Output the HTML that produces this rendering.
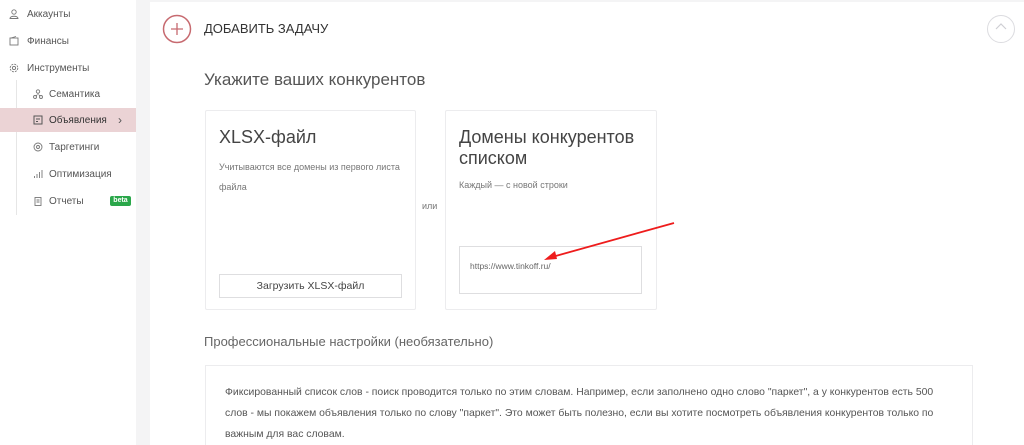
<!DOCTYPE html>
<html><head><meta charset="utf-8"><style>
*{box-sizing:border-box;margin:0;padding:0}
html,body{width:1024px;height:445px;overflow:hidden}
body{background:#f4f4f5;font-family:"Liberation Sans",sans-serif;position:relative;color:#333}
.side{position:absolute;left:0;top:0;width:136px;height:445px;background:#fff}
.it{position:absolute;font-size:10px;color:#555}
.ic{position:absolute;width:10px;height:10px}
.panel{position:absolute;left:150px;top:2px;width:874px;height:443px;background:#fff}
.a{position:absolute}
</style></head><body>
<div class="side">
 <svg class="ic" style="left:9px;top:9px" viewBox="0 0 10 10" fill="none" stroke="#777" stroke-width="0.9"><circle cx="5" cy="3" r="2.2"/><path d="M1 9.5c0-3 8-3 8 0z"/></svg>
 <div class="it" style="left:27px;top:9px">Аккаунты</div>
 <svg class="ic" style="left:9px;top:36px" viewBox="0 0 10 10" fill="none" stroke="#777" stroke-width="0.9"><rect x="1" y="2" width="8" height="7"/><path d="M2 2l5-1.5"/></svg>
 <div class="it" style="left:27px;top:36px">Финансы</div>
 <svg class="ic" style="left:9px;top:63px" viewBox="0 0 10 10" fill="none" stroke="#777" stroke-width="0.9"><circle cx="5" cy="5" r="1.6"/><circle cx="5" cy="5" r="3.8" stroke-dasharray="2 1"/></svg>
 <div class="it" style="left:27px;top:63px">Инструменты</div>
 <div class="a" style="left:16px;top:80px;width:1px;height:135px;background:#e6e6e6"></div>
 <svg class="ic" style="left:33px;top:89px" viewBox="0 0 10 10" fill="none" stroke="#777" stroke-width="0.9"><circle cx="5" cy="2.5" r="1.7"/><circle cx="2" cy="8" r="1.5"/><circle cx="8" cy="8" r="1.5"/><path d="M5 4v2M4 6l-1 1M6 6l1 1"/></svg>
 <div class="it" style="left:49px;top:89px">Семантика</div>
 <div class="a" style="left:0;top:108px;width:136px;height:24px;background:#ebd3d5"></div>
 <svg class="ic" style="left:33px;top:115px" viewBox="0 0 10 10" fill="none" stroke="#555" stroke-width="1"><rect x="1" y="1" width="8" height="8"/><path d="M3 4h4M3 6.5h2"/></svg>
 <div class="it" style="left:49px;top:115px;color:#333">Объявления</div>
 <div class="it" style="left:118px;top:113px;font-size:12px;color:#555">›</div>
 <svg class="ic" style="left:33px;top:142px" viewBox="0 0 10 10" fill="none" stroke="#777" stroke-width="0.9"><circle cx="5" cy="5" r="4"/><circle cx="5" cy="5" r="1.5"/></svg>
 <div class="it" style="left:49px;top:142px">Таргетинги</div>
 <svg class="ic" style="left:33px;top:169px" viewBox="0 0 10 10" fill="none" stroke="#777" stroke-width="0.9"><path d="M1.5 9V7M4 9V5M6.5 9V3M9 9V1"/></svg>
 <div class="it" style="left:49px;top:169px">Оптимизация</div>
 <svg class="ic" style="left:33px;top:196px" viewBox="0 0 10 10" fill="none" stroke="#777" stroke-width="0.9"><rect x="2" y="1.5" width="6" height="8"/><path d="M3.5 4h3M3.5 6h3"/></svg>
 <div class="it" style="left:49px;top:196px">Отчеты</div>
 <div class="a" style="left:110px;top:196px;width:21px;height:10px;background:#2aa74a;border-radius:2px;color:#fff;font-size:7px;font-weight:bold;text-align:center;line-height:10px">beta</div>
</div>
<div class="panel"></div>
<svg class="a" style="left:162px;top:14px" width="30" height="30" viewBox="0 0 30 30" fill="none" stroke="#c76a70" stroke-width="1.5"><circle cx="15" cy="15" r="13.5"/><path d="M9 15h12M15 9v12" stroke-width="1.3"/></svg>
<div class="a" style="left:204px;top:21px;font-size:13px;color:#333">ДОБАВИТЬ ЗАДАЧУ</div>
<div class="a" style="left:987px;top:15px;width:28px;height:28px;border:1.2px solid #dcdce0;border-radius:50%"></div>
<svg class="a" style="left:993px;top:21px" width="16" height="12" viewBox="0 0 16 12" fill="none" stroke="#cfcfd4" stroke-width="1.2"><path d="M3 8l5-5 5 5"/></svg>
<div class="a" style="left:204px;top:70px;font-size:17px;color:#555">Укажите ваших конкурентов</div>
<div class="a" style="left:205px;top:110px;width:211px;height:200px;border:1px solid #ececee;border-radius:2px"></div>
<div class="a" style="left:219px;top:127px;font-size:18px;color:#444">XLSX-файл</div>
<div class="a" style="left:219px;top:157px;width:190px;font-size:9px;line-height:20px;color:#777">Учитываются все домены из первого листа файла</div>
<div class="a" style="left:219px;top:274px;width:183px;height:24px;border:1px solid #dedee0;font-size:10.5px;color:#444;text-align:center;line-height:22px">Загрузить XLSX-файл</div>
<div class="a" style="left:422px;top:201px;font-size:9px;color:#777">или</div>
<div class="a" style="left:445px;top:110px;width:212px;height:200px;border:1px solid #ececee;border-radius:2px"></div>
<div class="a" style="left:459px;top:127px;font-size:18px;line-height:21px;color:#444">Домены конкурентов<br>списком</div>
<div class="a" style="left:459px;top:180px;font-size:9px;color:#777">Каждый — с новой строки</div>
<div class="a" style="left:459px;top:246px;width:183px;height:48px;border:1px solid #dedee0"></div>
<div class="a" style="left:470px;top:261px;font-size:8.5px;color:#666">https://www.tinkoff.ru/</div>
<svg class="a" style="left:530px;top:215px" width="150" height="50" viewBox="0 0 150 50"><path d="M144 8L22 42" stroke="#ee1c1c" stroke-width="1.8"/><path d="M14 45l11-9 2 8z" fill="#ee1c1c"/></svg>
<div class="a" style="left:204px;top:334px;font-size:13px;color:#666">Профессиональные настройки (необязательно)</div>
<div class="a" style="left:205px;top:365px;width:768px;height:90px;border:1px solid #ececee"></div>
<div class="a" style="left:225px;top:382px;width:722px;font-size:10.4px;line-height:21px;color:#555">Фиксированный список слов - поиск проводится только по этим словам. Например, если заполнено одно слово "паркет", а у конкурентов есть 500 слов - мы покажем объявления только по слову "паркет". Это может быть полезно, если вы хотите посмотреть объявления конкурентов только по важным для вас словам.</div>
</body></html>
